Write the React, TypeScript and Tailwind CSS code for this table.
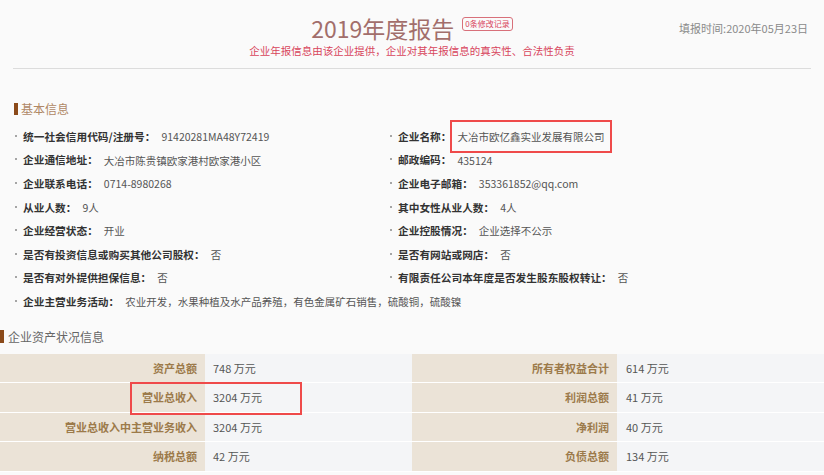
const basic: [string, React.ReactNode][] = [
  ["统一社会信用代码/注册号", "91420281MA48Y72419"],
  ["企业名称", "大冶市欧亿鑫实业发展有限公司"],
  ["企业通信地址", "大冶市陈贵镇欧家港村欧家港小区"],
  ["邮政编码", "435124"],
  ["企业联系电话", "0714-8980268"],
  ["企业电子邮箱", "353361852@qq.com"],
  ["从业人数", "9人"],
  ["其中女性从业人数", "4人"],
  ["企业经营状态", "开业"],
  ["企业控股情况", "企业选择不公示"],
  ["是否有投资信息或购买其他公司股权", "否"],
  ["是否有网站或网店", "否"],
  ["是否有对外提供担保信息", "否"],
  ["有限责任公司本年度是否发生股东股权转让", "否"],
];

const assets = [
  ["资产总额", "748 万元", "所有者权益合计", "614 万元"],
  ["营业总收入", "3204 万元", "利润总额", "41 万元"],
  ["营业总收入中主营业务收入", "3204 万元", "净利润", "40 万元"],
  ["纳税总额", "42 万元", "负债总额", "134 万元"],
];

function InfoRow({ label, value, boxed }: { label: string; value: React.ReactNode; boxed?: boolean }) {
  return (
    <div className="flex items-center h-[23.6px] whitespace-nowrap">
      <span className="ml-[1px] mr-[6px] mb-[2px] w-[2px] h-[2px] rounded-full bg-[#888]" />
      <span className="font-bold text-[10.7px] text-[#333]">{label}：</span>
      <span className={`ml-[6px] text-[10.5px] text-[#555] ${boxed ? "relative" : ""}`}>
        {value}
        {boxed && <span className="absolute -left-[7px] -right-[8px] -top-[9px] -bottom-[8px] border-2 border-[#ef4a4a]" />}
      </span>
    </div>
  );
}

export default function App() {
  return (
    <div
      className="w-[824px] h-[475px] overflow-hidden bg-[#fafafa]"
      style={{ fontFamily: '"Noto Sans CJK SC", "Noto Sans", sans-serif' }}
    >
      {/* Header */}
      <div className="pt-[12px]">
        <div className="grid grid-cols-[1fr_auto_1fr] items-center">
          <div />
          <div className="flex items-start">
            <span className="text-[23px] leading-[32px] text-[#a26e6b]">2019年度报告</span>
            <span className="ml-[8px] mt-[5px] border border-[#d8707a] rounded-[3px] px-[2px] text-[8px] leading-[12px] text-[#d8455c]">
              0条修改记录
            </span>
          </div>
          <div className="flex justify-end pr-[16px] text-[11px] text-[#8a8a8a]">填报时间:2020年05月23日</div>
        </div>
        <div className="text-center text-[10.5px] leading-[14px] text-[#d8455c]">
          企业年报信息由该企业提供，企业对其年报信息的真实性、合法性负责
        </div>
        <div className="mx-[13px] mt-[10px] border-t border-[#dcdcdc]" />
      </div>

      {/* 基本信息 */}
      <div className="mt-[32px] pl-[14px] flex items-center h-[16px]">
        <span className="w-[4px] h-[12px] bg-[#8b4a1a]" />
        <span className="ml-[3px] text-[12px] text-[#b08866]">基本信息</span>
      </div>
      <div className="mt-[8px] pl-[14px] grid grid-cols-[375px_1fr]">
        {basic.map(([l, v]) => (
          <InfoRow key={l} label={l} value={v} boxed={l === "企业名称"} />
        ))}
        <div className="col-span-2">
          <InfoRow label="企业主营业务活动" value="农业开发，水果种植及水产品养殖，有色金属矿石销售，硫酸铜，硫酸镍" />
        </div>
      </div>

      {/* 企业资产状况信息 */}
      <div className="mt-[15px] flex items-center h-[16px]">
        <span className="w-[4px] h-[13px] bg-[#8b4a1a]" />
        <span className="ml-[4px] text-[12px] text-[#666]">企业资产状况信息</span>
      </div>
      <div className="relative mt-[9px]">
        {assets.map(([l1, v1, l2, v2]) => (
          <div key={l1} className="grid grid-cols-[205px_207px_205px_207px] h-[29.5px] border-b border-white text-[11px]">
            <div className="bg-[#ebe3d7] flex items-center justify-end pr-[8px] font-bold text-[#9c7a4a]">{l1}</div>
            <div className="bg-[#f4f5f7] flex items-center pl-[8px] text-[#555]">{v1}</div>
            <div className="bg-[#ebe3d7] flex items-center justify-end pr-[8px] font-bold text-[#9c7a4a]">{l2}</div>
            <div className="bg-[#f4f5f7] flex items-center pl-[9px] text-[#555]">{v2}</div>
          </div>
        ))}
        <div className="absolute left-[130px] top-[28px] w-[172px] h-[33px] border-2 border-[#ef4a4a]" />
      </div>
    </div>
  );
}
